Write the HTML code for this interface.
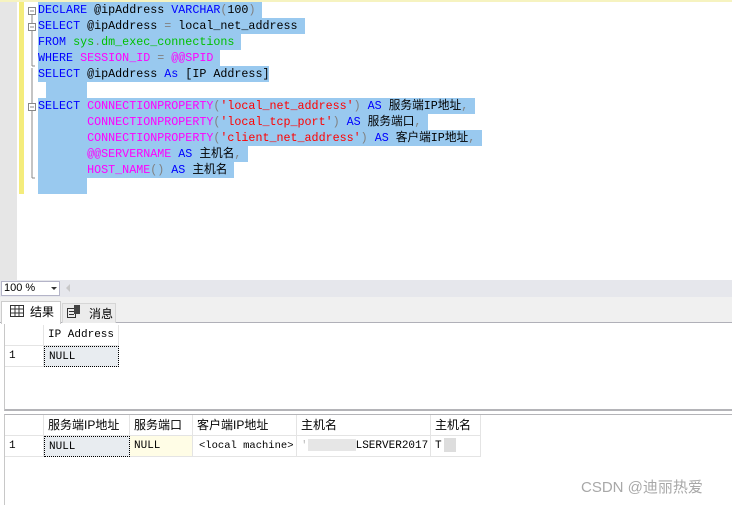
<!DOCTYPE html>
<html><head><meta charset="utf-8"><style>
*{margin:0;padding:0;box-sizing:border-box}
body{width:732px;height:505px;position:relative;background:#fff;overflow:hidden;font-family:"Liberation Sans","Noto Sans CJK SC",sans-serif}
.abs{position:absolute}
.code{position:absolute;left:38px;top:2px;font-family:"Liberation Mono","Noto Sans CJK SC",monospace;font-size:11.7px;line-height:16px}
.ln{height:16px;white-space:pre}
.ln span.h{background:#99c9ef;display:inline-block;height:16px}
.k{color:#0000ff}.m{color:#ff00ff}.g{color:#00c000}.r{color:#ff0000}.x{color:#808080}.b{color:#000}
.cell{position:absolute;white-space:nowrap;overflow:hidden;font-family:"Liberation Mono","Noto Sans CJK SC",monospace;font-size:11px;line-height:20px;padding-left:4px;border-right:1px solid #e4e4e4;border-bottom:1px solid #e4e4e4;color:#000}
.hd{font-family:"Liberation Sans","Noto Sans CJK SC",sans-serif;font-size:12px}
</style></head><body>
<div class="abs" style="left:0;top:0;width:732px;height:2px;background:#f6f3c0"></div>
<div class="abs" style="left:0;top:2px;width:17px;height:278px;background:#e6e6e6"></div>
<div class="abs" style="left:19px;top:2px;width:5px;height:192px;background:#f4ec7c"></div>
<svg class="abs" style="left:26px;top:2px" width="12" height="180">
<g fill="none" stroke="#888" stroke-width="1">
<rect x="2.5" y="5.5" width="7" height="7" fill="#fff"/><line x1="4" y1="9" x2="8" y2="9"/>
<rect x="2.5" y="21.5" width="7" height="7" fill="#fff"/><line x1="4" y1="25" x2="8" y2="25"/>
<line x1="6" y1="29" x2="6" y2="64"/><line x1="6" y1="64" x2="9" y2="64"/>
<line x1="6" y1="13" x2="6" y2="21"/>
<line x1="6" y1="66" x2="6" y2="101"/>
<rect x="2.5" y="101.5" width="7" height="7" fill="#fff"/><line x1="4" y1="105" x2="8" y2="105"/>
<line x1="6" y1="109" x2="6" y2="176"/><line x1="6" y1="176" x2="9" y2="176"/>
</g></svg>
<div class="code">
<div class="ln"><span class="h"><span class="k">DECLARE</span> @ipAddress <span class="k">VARCHAR</span><span class="x">(</span>100<span class="x">)</span> </span></div>
<div class="ln"><span class="h"><span class="k">SELECT</span> @ipAddress <span class="x">=</span> local_net_address </span></div>
<div class="ln"><span class="h"><span class="k">FROM</span> <span class="g">sys</span><span class="x">.</span><span class="g">dm_exec_connections</span> </span></div>
<div class="ln"><span class="h"><span class="k">WHERE</span> <span class="m">SESSION_ID</span> <span class="x">=</span> <span class="m">@@SPID</span> </span></div>
<div class="ln"><span class="h"><span class="k">SELECT</span> @ipAddress <span class="k">As</span> [IP Address]</span></div>
<div class="ln"><span class="h" style="width:41px;margin-left:8px"></span></div>
<div class="ln"><span class="h"><span class="k">SELECT</span> <span class="m">CONNECTIONPROPERTY</span><span class="x">(</span><span class="r">'local_net_address'</span><span class="x">)</span> <span class="k">AS</span> 服务端IP地址<span class="x">,</span> </span></div>
<div class="ln"><span class="h">       <span class="m">CONNECTIONPROPERTY</span><span class="x">(</span><span class="r">'local_tcp_port'</span><span class="x">)</span> <span class="k">AS</span> 服务端口<span class="x">,</span> </span></div>
<div class="ln"><span class="h">       <span class="m">CONNECTIONPROPERTY</span><span class="x">(</span><span class="r">'client_net_address'</span><span class="x">)</span> <span class="k">AS</span> 客户端IP地址<span class="x">,</span> </span></div>
<div class="ln"><span class="h">       <span class="m">@@SERVERNAME</span> <span class="k">AS</span> 主机名<span class="x">,</span> </span></div>
<div class="ln"><span class="h">       <span class="m">HOST_NAME</span><span class="x">()</span> <span class="k">AS</span> 主机名 </span></div>
<div class="ln"><span class="h" style="width:49px"></span></div>
</div>
<div class="abs" style="left:0;top:280px;width:732px;height:17px;background:#e6e7ec"></div>
<div class="abs" style="left:1px;top:281px;width:59px;height:15px;background:#fff;border:1px solid #b4b4c8;font-size:11px;line-height:13px;padding-left:2px">100 %</div>
<div class="abs" style="left:51px;top:287px;border-left:3px solid transparent;border-right:3px solid transparent;border-top:3px solid #333"></div>
<div class="abs" style="left:66px;top:284px;border-top:4px solid transparent;border-bottom:4px solid transparent;border-right:4px solid #c8c8c8"></div>
<div class="abs" style="left:0;top:297px;width:732px;height:26px;background:#f0f0f0;border-bottom:1px solid #b0b0b8"></div>
<div class="abs" style="left:1px;top:301px;width:60px;height:23px;background:#fff;border:1px solid #ccc;border-bottom:none;font-size:12px;line-height:20px;padding-left:28px;font-family:'Noto Sans CJK SC',sans-serif">结果</div>
<svg class="abs" style="left:10px;top:305px" width="14" height="12"><g fill="none" stroke="#333"><rect x="0.5" y="0.5" width="13" height="11"/><line x1="0" y1="4" x2="14" y2="4"/><line x1="0" y1="8" x2="14" y2="8"/><line x1="5" y1="0" x2="5" y2="12"/><line x1="9" y1="0" x2="9" y2="12"/></g></svg>
<div class="abs" style="left:62px;top:303px;width:54px;height:20px;background:#ececec;border:1px solid #d6d6d6;border-bottom:none;font-size:12px;line-height:19px;padding-left:26px;font-family:'Noto Sans CJK SC',sans-serif">消息</div>
<svg class="abs" style="left:67px;top:305px" width="14" height="14"><g fill="none" stroke="#333"><rect x="0.5" y="3.5" width="8" height="9"/><line x1="2" y1="6.5" x2="7" y2="6.5"/><line x1="2" y1="9.5" x2="7" y2="9.5"/></g><rect x="7" y="0" width="6" height="9" fill="#444"/></svg>
<div class="abs" style="left:4px;top:324px;width:728px;height:87px;border-left:1px solid #c8c8c8;border-bottom:2px solid #b4b4b8"></div>
<div class="cell" style="left:5px;top:325px;width:39px;height:21px"></div>
<div class="cell" style="left:44px;top:325px;width:75px;height:21px">IP Address</div>
<div class="cell" style="left:5px;top:346px;width:39px;height:21px">1</div>
<div class="cell" style="left:44px;top:346px;width:75px;height:21px;background:#e8ecf0;border:1px dotted #000">NULL</div>
<div class="abs" style="left:4px;top:414px;width:728px;height:91px;border-left:1px solid #c8c8c8;border-top:1px solid #b4b4b8"></div>
<div class="cell" style="left:5px;top:415px;width:39px;height:21px"></div>
<div class="cell hd" style="left:44px;top:415px;width:86px;height:21px">服务端IP地址</div>
<div class="cell hd" style="left:130px;top:415px;width:63px;height:21px">服务端口</div>
<div class="cell hd" style="left:193px;top:415px;width:104px;height:21px">客户端IP地址</div>
<div class="cell hd" style="left:297px;top:415px;width:134px;height:21px">主机名</div>
<div class="cell hd" style="left:431px;top:415px;width:50px;height:21px">主机名</div>
<div class="cell" style="left:5px;top:436px;width:39px;height:21px">1</div>
<div class="cell" style="left:44px;top:436px;width:86px;height:21px;background:#e8ecf0;border:1px dotted #000">NULL</div>
<div class="cell" style="left:130px;top:436px;width:63px;height:21px;background:#fffde6">NULL</div>
<div class="cell" style="left:193px;top:436px;width:104px;height:21px;padding-left:6px;font-size:10.5px">&lt;local machine&gt;</div>
<div class="cell" style="left:297px;top:436px;width:134px;height:21px"><span style="color:#bbb">'</span><span style="display:inline-block;width:48px;height:12px;background:#e6e6e6;vertical-align:middle"></span>LSERVER2017</div>
<div class="cell" style="left:431px;top:436px;width:50px;height:21px">T<span style="display:inline-block;width:12px;height:14px;background:#ddd;vertical-align:middle;margin-left:2px"></span></div>
<div class="abs" style="left:581px;top:476px;font-size:15px;color:#a8a8a8;font-family:'Liberation Sans','Noto Sans CJK SC',sans-serif">CSDN @迪丽热爱</div>
</body></html>
